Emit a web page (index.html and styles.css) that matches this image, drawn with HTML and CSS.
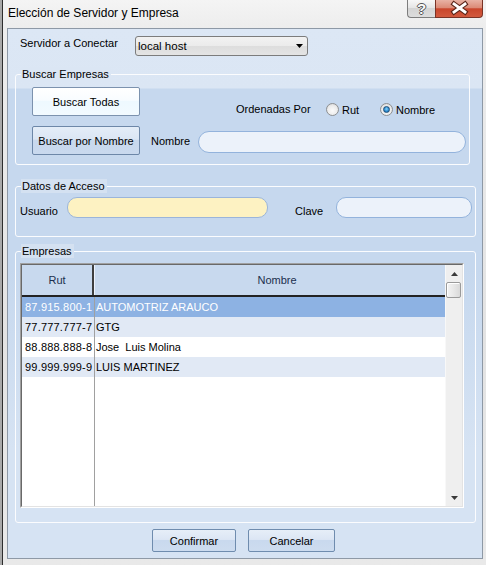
FILE: index.html
```html
<!DOCTYPE html>
<html lang="es">
<head>
<meta charset="utf-8">
<title>Elección de Servidor y Empresa</title>
<link rel="stylesheet" href="styles.css">
</head>
<body>
<div class="window">
  <div class="titlebar">
    <div class="title">Elección de Servidor y Empresa</div>
    <div class="caps">
      <div class="cap help">?</div>
      <div class="cap close">
        <svg width="47" height="17" viewBox="0 0 47 17">
          <path d="M18 4 L29 12 M29 4 L18 12" stroke="#5a2418" stroke-width="5" stroke-linecap="square"/>
          <path d="M18 4 L29 12 M29 4 L18 12" stroke="#ffffff" stroke-width="2.8" stroke-linecap="square"/>
        </svg>
      </div>
    </div>
  </div>

  <div class="client">
    <div class="server-row">
      <span class="server-lbl">Servidor a Conectar</span>
      <div class="combo">
        <span class="combo-text">local host</span>
        <svg class="combo-arrow" width="7" height="4" viewBox="0 0 7 4"><polygon points="0,0 7,0 3.5,4" fill="#000"/></svg>
      </div>
    </div>

    <div class="group g-buscar">
      <div class="legend legend-light">Buscar Empresas</div>
      <div class="row-a">
        <div class="btn btn-white btn-search">Buscar Todas</div>
        <span class="orden-lbl">Ordenadas Por</span>
        <div class="radio radio-rut"><span class="radio-circle"></span><span class="radio-text">Rut</span></div>
        <div class="radio"><span class="radio-circle checked"><span class="radio-dot"></span></span><span class="radio-text">Nombre</span></div>
      </div>
      <div class="row-b">
        <div class="btn btn-search">Buscar por Nombre</div>
        <span class="nombre-lbl">Nombre</span>
        <div class="input input-nombre"></div>
      </div>
    </div>

    <div class="group g-acceso">
      <div class="legend">Datos de Acceso</div>
      <div class="row-acceso">
        <span class="usuario-lbl">Usuario</span>
        <div class="input input-usuario"></div>
        <span class="clave-lbl">Clave</span>
        <div class="input input-clave"></div>
      </div>
    </div>

    <div class="group g-empresas">
      <div class="legend legend-emp">Empresas</div>
      <div class="grid">
        <div class="grid-inner">
          <div class="grid-body">
            <div class="grid-head">
              <div class="h-rut">Rut</div>
              <div class="h-nom">Nombre</div>
            </div>
            <div class="grid-row selected"><div class="c-rut">87.915.800-1</div><div class="c-nom">AUTOMOTRIZ ARAUCO</div></div>
            <div class="grid-row alt"><div class="c-rut">77.777.777-7</div><div class="c-nom">GTG</div></div>
            <div class="grid-row"><div class="c-rut">88.888.888-8</div><div class="c-nom">Jose  Luis Molina</div></div>
            <div class="grid-row alt"><div class="c-rut">99.999.999-9</div><div class="c-nom">LUIS MARTINEZ</div></div>
            <div class="grid-row empty"><div class="c-rut"></div><div class="c-nom"></div></div>
          </div>
          <div class="vscroll">
            <div class="sb-btn"><svg width="7" height="4" viewBox="0 0 7 4"><polygon points="0,4 7,4 3.5,0" fill="#3a3a3a"/></svg></div>
            <div class="sb-thumb"></div>
            <div class="sb-track"></div>
            <div class="sb-btn"><svg width="7" height="4" viewBox="0 0 7 4"><polygon points="0,0 7,0 3.5,4" fill="#3a3a3a"/></svg></div>
          </div>
        </div>
      </div>
    </div>

    <div class="actions">
      <div class="btn btn-confirm">Confirmar</div>
      <div class="btn btn-cancel">Cancelar</div>
    </div>
  </div>
</div>
</body>
</html>
```

FILE: styles.css
```css
* { box-sizing: border-box; }
html, body { margin: 0; padding: 0; }
body {
  width: 486px;
  height: 565px;
  overflow: hidden;
  font-family: "Liberation Sans", Arial, sans-serif;
  font-size: 11px;
  color: #000;
  background: #e6e6e6;
}

.window {
  width: 486px;
  height: 565px;
  padding: 0 3px 6px 7px;
  display: flex;
  flex-direction: column;
  background: linear-gradient(to bottom, #f4f4f4 0, #ededed 28px, #e3e3e3 60%, #e9e9e9 100%);
  box-shadow: inset 2px 0 0 #a9a9a9, inset 3px 0 0 #2d2d2d;
}

/* title bar */
.titlebar {
  flex: none;
  height: 28px;
  display: flex;
  justify-content: space-between;
  align-items: flex-start;
}
.title {
  font-size: 12px;
  line-height: 15px;
  padding: 6px 0 0 1px;
}
.caps { display: flex; }
.cap { height: 18px; }
.help {
  width: 28px;
  border: 1px solid #7d7d7d;
  border-top: none;
  border-right: none;
  border-radius: 0 0 0 4px;
  background: linear-gradient(to bottom, #f7f7f7 0%, #e6e6e6 45%, #d4d4d4 50%, #dddddd 100%);
  text-align: center;
  font-weight: bold;
  font-size: 15px;
  line-height: 17px;
  color: #fbfbfb;
  text-shadow: 1px 0 0 #555, -1px 0 0 #555, 0 1px 0 #555, 0 -1px 0 #555;
}
.close {
  width: 48px;
  border: 1px solid #7a3326;
  border-top: none;
  border-radius: 0 0 4px 0;
  background: linear-gradient(to bottom, #e8b2a4 0%, #dc8b77 45%, #c9462c 52%, #d25a3e 100%);
}
.close svg { display: block; }

/* client area */
.client {
  flex: none;
  height: 531px;
  border: 1px solid #8e99a6;
  background: linear-gradient(to bottom,
    #dce7f5 0px, #dbe6f4 59px, #c6d8ee 60px, #c6d8ee 240px, #d6e3f3 420px, #d6e3f3 100%);
}

.server-row {
  display: flex;
  margin-top: 7px;
  padding-left: 12px;
  height: 20px;
}
.server-lbl {
  width: 115px;
  line-height: 14px;
}
.combo {
  width: 173px;
  height: 20px;
  border: 1px solid #7c7c7c;
  border-radius: 3px;
  background: linear-gradient(to bottom, #f2f2f2 0%, #ebebeb 50%, #dddddd 51%, #e4e4e4 100%);
  display: flex;
  align-items: center;
  justify-content: space-between;
  padding: 0 4px 0 2px;
}
.combo-text { font-size: 11.5px; line-height: 18px; }
.combo-arrow { display: block; }

/* group boxes */
.group {
  margin-left: 7px;
  border: 1px solid #fbfcfe;
  border-radius: 3px;
}
.legend {
  width: fit-content;
  height: 14px;
  line-height: 14px;
  margin: -8px 0 0 5px;
  padding: 0 2px 0 1px;
  background: #d4e1f1;
}
.legend-light { background: #dbe6f4; margin-bottom: 6px; }

.g-buscar {
  width: 455px;
  margin-top: 18px;
  padding-bottom: 9px;
}
.row-a {
  display: flex;
  align-items: flex-end;
  height: 29px;
  padding-left: 16px;
}
.row-b {
  display: flex;
  align-items: center;
  height: 29px;
  margin-top: 10px;
  padding-left: 16px;
}

.btn {
  height: 29px;
  border: 1px solid #6d87a8;
  border-radius: 2px;
  display: flex;
  align-items: center;
  justify-content: center;
  background: linear-gradient(to bottom, #e4edf8 0%, #dbe6f4 45%, #c8d8ed 50%, #c9d9ee 100%);
  white-space: nowrap;
}
.btn-search { width: 108px; }
.btn-white {
  border-color: #7c92ae;
  background: linear-gradient(to bottom, #ffffff 0%, #f8fcff 45%, #eef9ff 50%, #f2faff 100%);
}

.orden-lbl {
  width: 90px;
  margin-left: 96px;
  line-height: 14px;
}
.radio {
  display: flex;
  align-items: center;
  height: 13px;
}
.radio-rut { width: 54px; }
.radio-circle {
  width: 13px;
  height: 13px;
  border-radius: 50%;
  border: 1px solid #8d8f91;
  background: radial-gradient(circle at 50% 60%, #fbfbfb 0%, #ececec 55%, #cfcfcf 100%);
  display: flex;
  align-items: center;
  justify-content: center;
}
.radio-dot {
  width: 7px;
  height: 7px;
  border-radius: 50%;
  border: 1px solid #1f4e78;
  background: radial-gradient(circle at 50% 40%, #8fd3f7 0%, #2d8fd3 55%, #175b98 100%);
}
.radio-text { margin-left: 3px; line-height: 14px; }

.nombre-lbl {
  width: 47px;
  margin-left: 11px;
  line-height: 14px;
}
.input {
  height: 22px;
  border: 1px solid #93b3dc;
  border-radius: 11px;
  background: #ecf2fa;
}
.input-nombre {
  width: 268px;
  align-self: flex-start;
  margin-top: 5px;
}

/* datos de acceso */
.g-acceso {
  width: 461px;
  margin-top: 21px;
  padding-bottom: 18px;
}
.g-acceso .legend { margin-bottom: 4px; }
.row-acceso {
  display: flex;
  align-items: flex-end;
  height: 21px;
  padding-left: 4px;
}
.row-acceso .input { height: 21px; border-radius: 10px; align-self: flex-start; }
.usuario-lbl { width: 47px; line-height: 14px; }
.input-usuario { width: 201px; background: #fdf2c2; border-color: #9bb5da; }
.clave-lbl { width: 41px; margin-left: 27px; line-height: 14px; }
.input-clave { width: 136px; }

/* empresas */
.g-empresas {
  width: 461px;
  margin-top: 14px;
  padding-bottom: 14px;
}
.legend-emp { margin-bottom: 5px; }
.grid {
  margin-left: 4px;
  width: 444px;
  height: 245px;
  border: 1px solid;
  border-color: #a0a0a0 #ffffff #ffffff #a0a0a0;
}
.grid-inner {
  height: 100%;
  display: flex;
  border: 1px solid;
  border-color: #696969 #e3e3e3 #e3e3e3 #696969;
}
.grid-body {
  width: 423px;
  display: flex;
  flex-direction: column;
  background: #ffffff;
}
.grid-head {
  display: flex;
  height: 32px;
  border-bottom: 2px solid #222;
  background: #c8d9ee;
  color: #1b2f4d;
}
.h-rut {
  width: 72px;
  border-right: 2px solid #3e3e3e;
  display: flex;
  align-items: center;
  justify-content: center;
}
.h-nom {
  flex: 1;
  border-left: 1px solid #edf2fa;
  display: flex;
  align-items: center;
  justify-content: center;
  padding-left: 14px;
}
.grid-row {
  display: flex;
  height: 20px;
  line-height: 20px;
  background: #ffffff;
}
.grid-row.alt { background: #e1e9f5; }
.grid-row.selected { background: #8db2e3; color: #ffffff; }
.grid-row.empty { flex: 1; }
.c-rut {
  width: 72px;
  padding-left: 3px;
  letter-spacing: 0.2px;
  white-space: nowrap;
}
.c-nom {
  flex: 1;
  border-left: 1px solid #a0a0a0;
  margin-left: 0;
  padding-left: 1px;
  white-space: pre;
}

.vscroll {
  width: 17px;
  display: flex;
  flex-direction: column;
  background: #efefef;
  border-left: 1px solid #f8f8f8;
}
.sb-btn {
  height: 17px;
  flex: none;
  display: flex;
  align-items: center;
  justify-content: center;
}
.sb-btn svg { display: block; }
.sb-thumb {
  flex: none;
  height: 16px;
  width: 15px;
  border: 1px solid #9a9a9a;
  border-radius: 2px;
  background: linear-gradient(to right, #f4f4f4 0%, #e8e8e8 50%, #d9d9d9 100%);
  box-shadow: inset 1px 1px 0 #ffffff;
}
.sb-track { flex: 1; }

/* bottom buttons */
.actions {
  display: flex;
  gap: 12px;
  margin-top: 6px;
  padding-left: 144px;
}
.actions .btn {
  height: 23px;
  border-color: #6f8cae;
  background: linear-gradient(to bottom, #e6eef8 0%, #dce6f4 45%, #c9d9ee 50%, #cddcef 100%);
}
.btn-confirm { width: 84px; }
.btn-cancel { width: 87px; }
```
